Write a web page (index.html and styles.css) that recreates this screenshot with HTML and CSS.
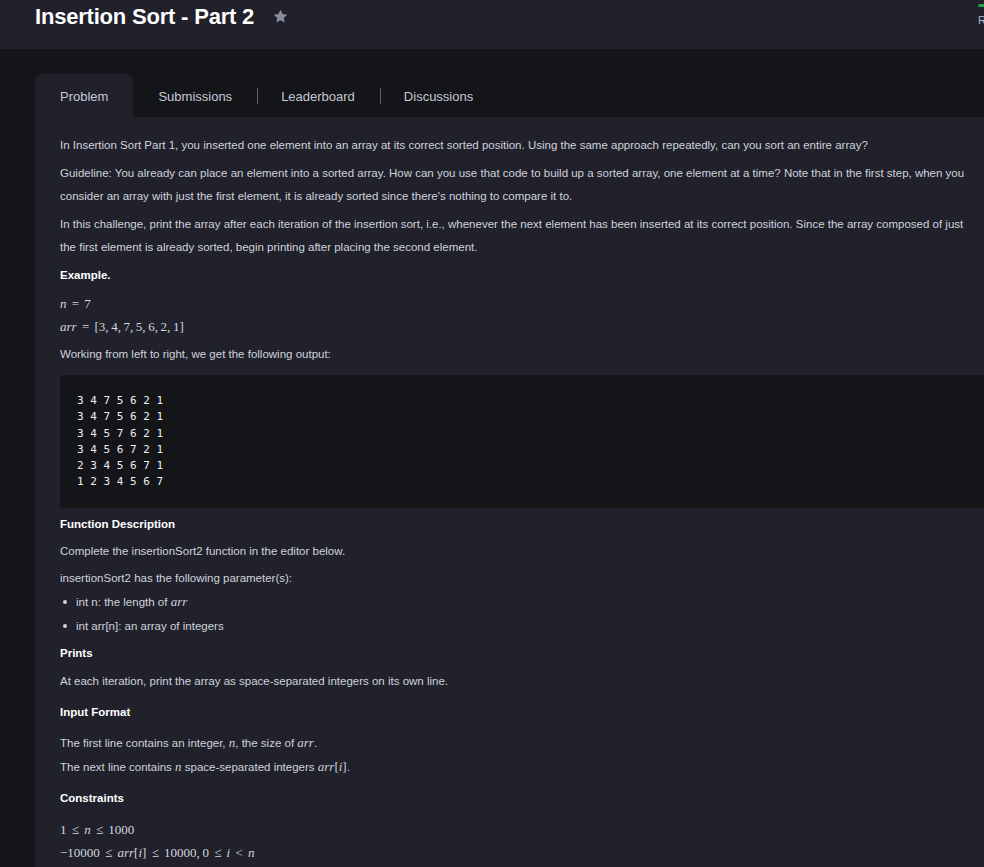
FILE: index.html
```html
<!DOCTYPE html>
<html lang="en">
<head>
<meta charset="utf-8">
<title>Insertion Sort - Part 2</title>
<link rel="stylesheet" href="styles.css">
</head>
<body>
<header class="topbar">
  <div class="title-group">
    <h1 class="title">Insertion Sort - Part 2</h1>
    <svg class="star" viewBox="0 0 24 24" width="17" height="17" aria-hidden="true"><path d="M12 2.5l2.9 6.1 6.6.8-4.9 4.6 1.3 6.6L12 17.3l-5.9 3.3 1.3-6.6-4.9-4.6 6.6-.8z" fill="#8b8b9e"/></svg>
  </div>
  <div class="top-right">
    <span class="progress"></span>
    <span class="rank">Rank</span>
  </div>
</header>

<main class="main">
  <nav class="tabs">
    <a class="tab active">Problem</a>
    <a class="tab">Submissions</a>
    <a class="tab sep">Leaderboard</a>
    <a class="tab sep">Discussions</a>
  </nav>

  <section class="panel">
    <p>In Insertion Sort Part 1, you inserted one element into an array at its correct sorted position. Using the same approach repeatedly, can you sort an entire array?</p>
    <p>Guideline: You already can place an element into a sorted array. How can you use that code to build up a sorted array, one element at a time? Note that in the first step, when you consider an array with just the first element, it is already sorted since there's nothing to compare it to.</p>
    <p>In this challenge, print the array after each iteration of the insertion sort, i.e., whenever the next element has been inserted at its correct position. Since the array composed of just the first element is already sorted, begin printing after placing the second element.</p>
    <p class="heading">Example.</p>
    <div class="math-block">
      <div><span class="mi">n</span> <span class="mo">=</span> 7</div>
      <div><span class="mi">arr</span> <span class="mo">=</span> [3,&thinsp;4,&thinsp;7,&thinsp;5,&thinsp;6,&thinsp;2,&thinsp;1]</div>
    </div>
    <p>Working from left to right, we get the following output:</p>
    <pre class="code">3 4 7 5 6 2 1
3 4 7 5 6 2 1
3 4 5 7 6 2 1
3 4 5 6 7 2 1
2 3 4 5 6 7 1
1 2 3 4 5 6 7</pre>
    <p class="heading snug">Function Description</p>
    <p class="snug">Complete the insertionSort2 function in the editor below.</p>
    <p class="before-list">insertionSort2 has the following parameter(s):</p>
    <ul class="list">
      <li>int n: the length of <span class="mi sm">arr</span></li>
      <li>int arr[n]: an array of integers</li>
    </ul>
    <p class="heading">Prints</p>
    <p class="spaced">At each iteration, print the array as space-separated integers on its own line.</p>
    <p class="heading roomy">Input Format</p>
    <p class="tight">The first line contains an integer, <span class="mi sm">n</span>, the size of <span class="mi sm">arr</span>.</p>
    <p class="spaced">The next line contains <span class="mi sm">n</span> space-separated integers <span class="mi sm">arr</span><span class="sm-serif">[</span><span class="mi sm">i</span><span class="sm-serif">]</span>.</p>
    <p class="heading roomy">Constraints</p>
    <div class="math-block">
      <div>1 <span class="mo">&le;</span> <span class="mi">n</span> <span class="mo">&le;</span> 1000</div>
      <div>&minus;10000 <span class="mo">&le;</span> <span class="mi">arr</span>[<span class="mi">i</span>] <span class="mo">&le;</span> 10000,&thinsp;0 <span class="mo">&le;</span> <span class="mi">i</span> <span class="mo">&lt;</span> <span class="mi">n</span></div>
    </div>
  </section>
</main>
</body>
</html>
```

FILE: styles.css
```css
html, body {
  margin: 0;
  padding: 0;
  overflow: hidden;
  background: #141519;
}

body {
  font-family: "Liberation Sans", Arial, sans-serif;
  color: #d0d2dd;
}

.topbar {
  height: 49px;
  background: #20212b;
  display: flex;
  align-items: flex-start;
  justify-content: space-between;
  padding-left: 35px;
  box-sizing: border-box;
}

.title-group {
  display: flex;
  align-items: center;
  gap: 19px;
  height: 34px;
}

.title {
  margin: 0;
  font-size: 22px;
  font-weight: 700;
  color: #ffffff;
  letter-spacing: -0.2px;
  line-height: 34px;
}

.star {
  display: block;
  margin-top: -1px;
  margin-left: -1px;
}

.top-right {
  display: flex;
  flex-direction: column;
  width: 30px;
  margin-right: -24px;
  padding-top: 4px;
  gap: 6px;
}

.progress {
  display: block;
  width: 30px;
  height: 3px;
  border-radius: 2px;
  background: #1ba94c;
}

.rank {
  font-size: 11px;
  color: #aeb6cf;
  line-height: 14px;
}

.main {
  padding: 25px 0 0 35px;
}

.tabs {
  display: flex;
  height: 43px;
  align-items: stretch;
}

.tab {
  display: flex;
  align-items: center;
  padding: 2px 25px 0 25px;
  font-size: 13px;
  color: #c6c8d5;
  position: relative;
  cursor: pointer;
}

.tab.active {
  background: #20212b;
  border-radius: 7px 7px 0 0;
  padding-right: 25px;
}

.tab.sep {
  padding-left: 24px;
}

.tab.sep::before {
  content: "";
  position: absolute;
  left: 0;
  top: 14px;
  height: 16px;
  width: 1px;
  background: #5c5e6b;
}

.panel {
  background: #20212b;
  width: 940px;
  padding: 17px 25px 40px 25px;
  font-size: 11.5px;
  line-height: 23px;
}

.panel p {
  margin: 0 0 5px 0;
  max-width: 912px;
}

.panel p.heading {
  color: #ffffff;
  font-weight: 700;
  font-size: 11.5px;
  margin-bottom: 5px;
}

.panel p.snug {
  margin-bottom: 4px;
}

.panel p.heading.roomy {
  margin-bottom: 8px;
}

.panel p.spaced {
  margin-bottom: 8px;
}

.panel p.tight {
  margin-bottom: 1px;
}

.panel p.before-list {
  margin-bottom: 0;
}

.math-block {
  font-family: "Liberation Serif", "Times New Roman", serif;
  font-size: 13px;
  line-height: 23px;
  margin-bottom: 5px;
  color: #d4d6df;
}

.mi {
  font-style: italic;
  font-family: "Liberation Serif", "Times New Roman", serif;
}

.mi.sm {
  font-size: 13px;
  line-height: 1;
}

.sm-serif {
  font-family: "Liberation Serif", "Times New Roman", serif;
  font-size: 13px;
  line-height: 1;
}

.mo {
  padding: 0 2px;
}

.code {
  margin: 9px 0 5px 0;
  background: #141519;
  border-radius: 4px;
  padding: 18px 17px 17px 17px;
  font-family: "DejaVu Sans Mono", monospace;
  font-size: 11px;
  line-height: 16.3px;
  color: #eceef4;
}

.list {
  list-style: none;
  margin: 0 0 4px 0;
  padding: 0;
}

.list li {
  position: relative;
  padding-left: 16px;
  line-height: 24px;
}

.list li::before {
  content: "";
  position: absolute;
  left: 3px;
  top: 10px;
  width: 4px;
  height: 4px;
  border-radius: 50%;
  background: #cfd1dc;
}
```
